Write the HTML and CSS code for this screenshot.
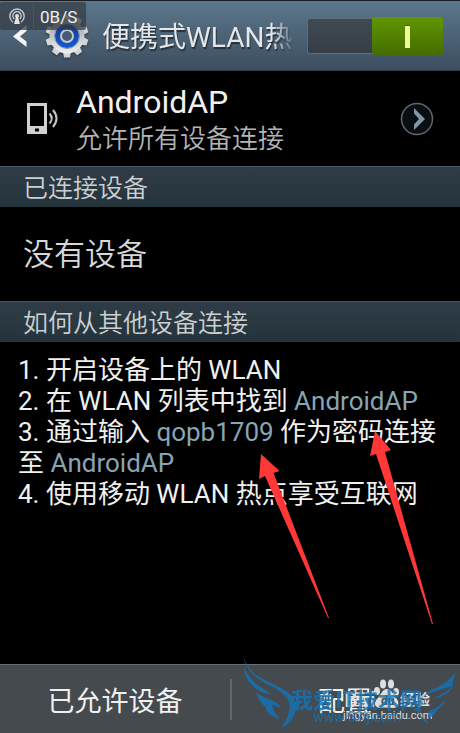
FILE: index.html
```html
<!DOCTYPE html>
<html lang="zh-CN">
<head>
<meta charset="utf-8">
<meta name="viewport" content="width=device-width, initial-scale=1">
<title>便携式WLAN热点</title>
<link rel="stylesheet" href="styles.css">
</head>
<body>
<div class="screen">
  <header class="bar">
    <button class="back" type="button" aria-label="返回">
      <svg width="16" height="24" viewBox="0 0 16 24"><path d="M14.500 1 1 12.500 14.500 23V17.500L8 12.500 14.500 7Z" fill="#f4f4f4"/></svg>
    </button>
    <svg class="gear" width="44" height="44" viewBox="-22 -22 44 44" aria-hidden="true">
      <defs>
        <linearGradient id="metal" x1="0" y1="0" x2="0" y2="1"><stop offset="0" stop-color="#8f9295"/><stop offset=".5" stop-color="#c4c5c7"/><stop offset="1" stop-color="#f0f0f0"/></linearGradient>
        <linearGradient id="blue" x1="0" y1="0" x2="0" y2="1"><stop offset="0" stop-color="#153b91"/><stop offset="1" stop-color="#1457d0"/></linearGradient>
        <g id="teeth"><path id="tooth" d="M-4-16-3-21.500H3L4-16Z"/><use href="#tooth" transform="rotate(36)"/><use href="#tooth" transform="rotate(72)"/><use href="#tooth" transform="rotate(108)"/><use href="#tooth" transform="rotate(144)"/><use href="#tooth" transform="rotate(180)"/><use href="#tooth" transform="rotate(216)"/><use href="#tooth" transform="rotate(252)"/><use href="#tooth" transform="rotate(288)"/><use href="#tooth" transform="rotate(324)"/></g>
      </defs>
      <use href="#teeth" fill="#d3d4d5"/>
      <circle r="17.500" fill="url(#metal)"/>
      <circle r="9" fill="none" stroke="url(#blue)" stroke-width="6"/>
      <circle r="12.500" fill="none" stroke="#8494ad" stroke-width="1"/>
      <circle r="6" fill="#465c72" stroke="#c4c9d0" stroke-width="2"/>
    </svg>
    <h1 class="title">便携式WLAN热点</h1>
    <label class="switch"><input type="checkbox" role="switch" checked aria-label="便携式WLAN热点"><span class="thumb"></span></label>
    <div class="speed">
      <svg width="18" height="18" viewBox="0 0 18 18" aria-hidden="true"><g fill="none" stroke="#c9cdd0" stroke-width="1.300"><path d="M5 15.200A7.200 7.200 0 1 1 13 15.200"/><path d="M6.200 12A4.200 4.200 0 1 1 11.800 12"/></g><circle cx="9" cy="9" r="2" fill="#e1e3e4"/><path d="M8 10h2l2 7H6Z" fill="#e1e3e4"/></svg>
      <span class="rate">0B/S</span>
    </div>
  </header>
  <main class="content">
    <a class="network" href="#configure">
      <svg class="phone" width="32" height="32" viewBox="0 0 32 32" aria-hidden="true"><path fill="#d0d0d0" fill-rule="evenodd" d="M0 0H20V31H0ZM3 3V23H17V3ZM8 25.500V28.500H12V25.500Z"/><g fill="none" stroke="#c4c4c4" stroke-width="2"><path d="M22.500 10.500Q27 15.500 22.500 20.500"/><path d="M26 7Q33 15.500 26 24"/></g></svg>
      <span class="names"><span class="ssid">AndroidAP</span><span class="policy">允许所有设备连接</span></span>
      <svg width="34" height="34" viewBox="0 0 34 34" aria-hidden="true"><circle cx="17" cy="17" r="15.500" fill="#0b0e10" stroke="#62666c" stroke-width="1.500"/><path d="M14 6 25 17 14 28V22.500L19 17 14 11.500Z" fill="#8196ac"/></svg>
    </a>
    <h2 class="section">已连接设备</h2>
    <p class="empty">没有设备</p>
    <h2 class="section">如何从其他设备连接</h2>
    <div class="steps">
      <p>1. 开启设备上的 WLAN</p>
      <p>2. 在 WLAN 列表中找到 <em>AndroidAP</em></p>
      <p>3. 通过输入 <em>qopb1709</em> 作为密码连接至 <em>AndroidAP</em></p>
      <p>4. 使用移动 WLAN 热点享受互联网</p>
      <svg class="arrows" width="178" height="196" viewBox="258 430 178 196" aria-hidden="true"><g fill="#ff3737"><path d="M261 454 279.500 471 273.500 473 329 618 328 618 265 476 259 479Z"/><path d="M375 431 391 450 385 452 433 624 432 624 376 454 370 456Z"/></g></svg>
    </div>
  </main>
  <footer class="actions">
    <button type="button">已允许设备</button>
    <button type="button">配置</button>
    <svg class="mark" width="220" height="78" viewBox="240 655 220 78" aria-hidden="true">
      <g fill="#dedede">
        <text class="mark-cn" x="344" y="707" font-size="20">Bai</text>
        <path d="M387 689C392 689 393 695 396 698 400 702 399 708 393 708 389 708 385 707 381 708 374 708 373 702 378 698 381 695 382 689 387 689Z"/>
        <ellipse cx="377" cy="691" rx="3" ry="4"/><ellipse cx="383" cy="684" rx="3" ry="4.500"/><ellipse cx="391" cy="684" rx="3" ry="4.500"/><ellipse cx="396" cy="692" rx="3" ry="4"/>
        <text class="mark-cn" x="400" y="705" font-size="15">经验</text>
        <text class="mark-url" x="343" y="719" font-size="11">jingyan.baidu.com</text>
      </g>
      <text class="mark-du" x="381" y="705" font-size="12" fill="#454a4e">du</text>
      <g fill="#1474b8" opacity=".82">
        <path d="M243 656Q248 671 261 678L279 687Q298 696 296 710 292 724 281 728 292 713 289 702 286 693 269 685 247 675 243 656Z"/>
        <path d="M244 667Q250 681 262 688 272 694 270 694 256 692 248 680 244 674 244 667Z"/>
        <path d="M256 693Q265 698 271 700 278 702 281 708 274 705 272 705 273 711 280 719 266 715 266 707 260 704 256 693Z"/>
        <path d="M455 673Q448 682 438 687 419 694 417 708 417 716 428 724 430 723 420 715 420 707 422 696 438 690 452 686 455 673Z"/>
        <path d="M454 684Q449 696 434 699L440 695Q448 692 454 684Z"/>
        <path d="M445 699Q440 708 431 710 426 716 429 718 436 714 438 709 444 706 445 699Z"/>
        <text class="mark-cn" x="291" y="708" font-size="22">我爱IT技术网</text>
        <text class="mark-url" x="313" y="722" font-size="14">www.52ij.com</text>
      </g>
    </svg>
  </footer>
</div>
</body>
</html>
```
FILE: styles.css
```css
* { box-sizing: border-box; }
body {
  margin: 0;
  background: #000;
  color: #f0f0f0;
  font-family: Roboto, "Noto Sans CJK SC", sans-serif;
}
h1, h2, p { margin: 0; font-weight: 400; }
button { border: 0; padding: 0; background: none; color: inherit; font: inherit; }
.screen { display: flex; flex-direction: column; min-height: 100vh; }

.bar {
  position: relative;
  display: flex;
  align-items: center;
  height: 71px;
  padding: 1px 17px 0 12px;
  border-top: 1px solid #1c1f21;
  border-bottom: 1px solid #2e3c49;
  background: linear-gradient(#5b778c, #3d4e60);
}
.back { display: flex; width: 33px; }
.gear { flex: none; filter: drop-shadow(0 1px 1px #26323d); }
.title {
  flex: 1;
  min-width: 0;
  margin: 0 12px 0 13px;
  padding-top: 3px;
  overflow: hidden;
  white-space: nowrap;
  font-size: 28px;
  line-height: 40px;
  color: #e4e6e8;
  text-shadow: 1px 2px 1px #26303a;
  mask-image: linear-gradient(to right, #000 88%, transparent);
}
.switch {
  position: relative;
  display: flex;
  justify-content: flex-end;
  width: 136px;
  height: 38px;
}
.switch input {
  position: absolute;
  inset: 1px 2px 1px 0;
  margin: 0;
  appearance: none;
  border: 1px solid #5d6e7b;
  border-radius: 3px;
  background: linear-gradient(#3f4a53, #363e46);
}
.thumb {
  position: relative;
  display: flex;
  align-items: center;
  justify-content: center;
  width: 71px;
  border-radius: 3px;
  background: linear-gradient(#609700, #456c00);
}
.thumb::after { content: ""; width: 5px; height: 22px; background: #edff96; border-top: 1px solid #3c6000; }
.speed {
  position: absolute;
  top: 1px;
  left: 0;
  display: flex;
  align-items: center;
  height: 28px;
  width: 86px;
  padding-left: 8px;
  border-radius: 2px;
  background: #333b42b8;
  font-size: 17px;
}
.rate { margin-left: 7px; padding: 2px 0 0 6px; line-height: 24px; border-left: 1px solid #4b555d; }

.content { flex: 1; }
.network {
  display: flex;
  align-items: center;
  height: 95px;
  padding: 0 26px 0 27px;
  color: inherit;
  text-decoration: none;
}
.names { flex: 1; display: flex; flex-direction: column; margin-left: 17px; padding-top: 2px; }
.ssid { font-size: 32px; line-height: 38px; }
.policy { font-size: 26px; line-height: 36px; color: #b4b4b4; font-weight: 350; }
.section {
  height: 41px;
  padding: 2px 0 0 23px;
  border-top: 1px solid #4b5861;
  background: linear-gradient(#2f3c48, #24343b);
  color: #cdd0d2;
  font-size: 25px;
  line-height: 39px;
  font-weight: 350;
}
.empty { padding: 2px 0 0 23px; font-size: 31px; line-height: 92px; color: #d8d8d8; font-weight: 350; }
.steps { position: relative; padding: 13px 18px; font-size: 26px; line-height: 31px; }
.steps em { font-style: normal; color: #86a5b5; }
.arrows { position: absolute; top: 88px; left: 258px; }

.actions {
  position: relative;
  display: grid;
  grid-template-columns: 1fr 1fr;
  height: 69px;
  border-top: 1px solid #686d70;
  background: #454a4e;
  font-size: 27px;
}
.actions button + button { background: linear-gradient(#62676a, #62676a) left center / 2px 41px no-repeat; }
.mark { position: absolute; right: 0; bottom: 0; pointer-events: none; }
.mark-cn { font-family: "Noto Sans CJK SC", sans-serif; font-weight: 700; }
.mark-url { font-family: Roboto, sans-serif; }
.mark-du { font-family: Roboto, sans-serif; font-weight: 700; }
```
